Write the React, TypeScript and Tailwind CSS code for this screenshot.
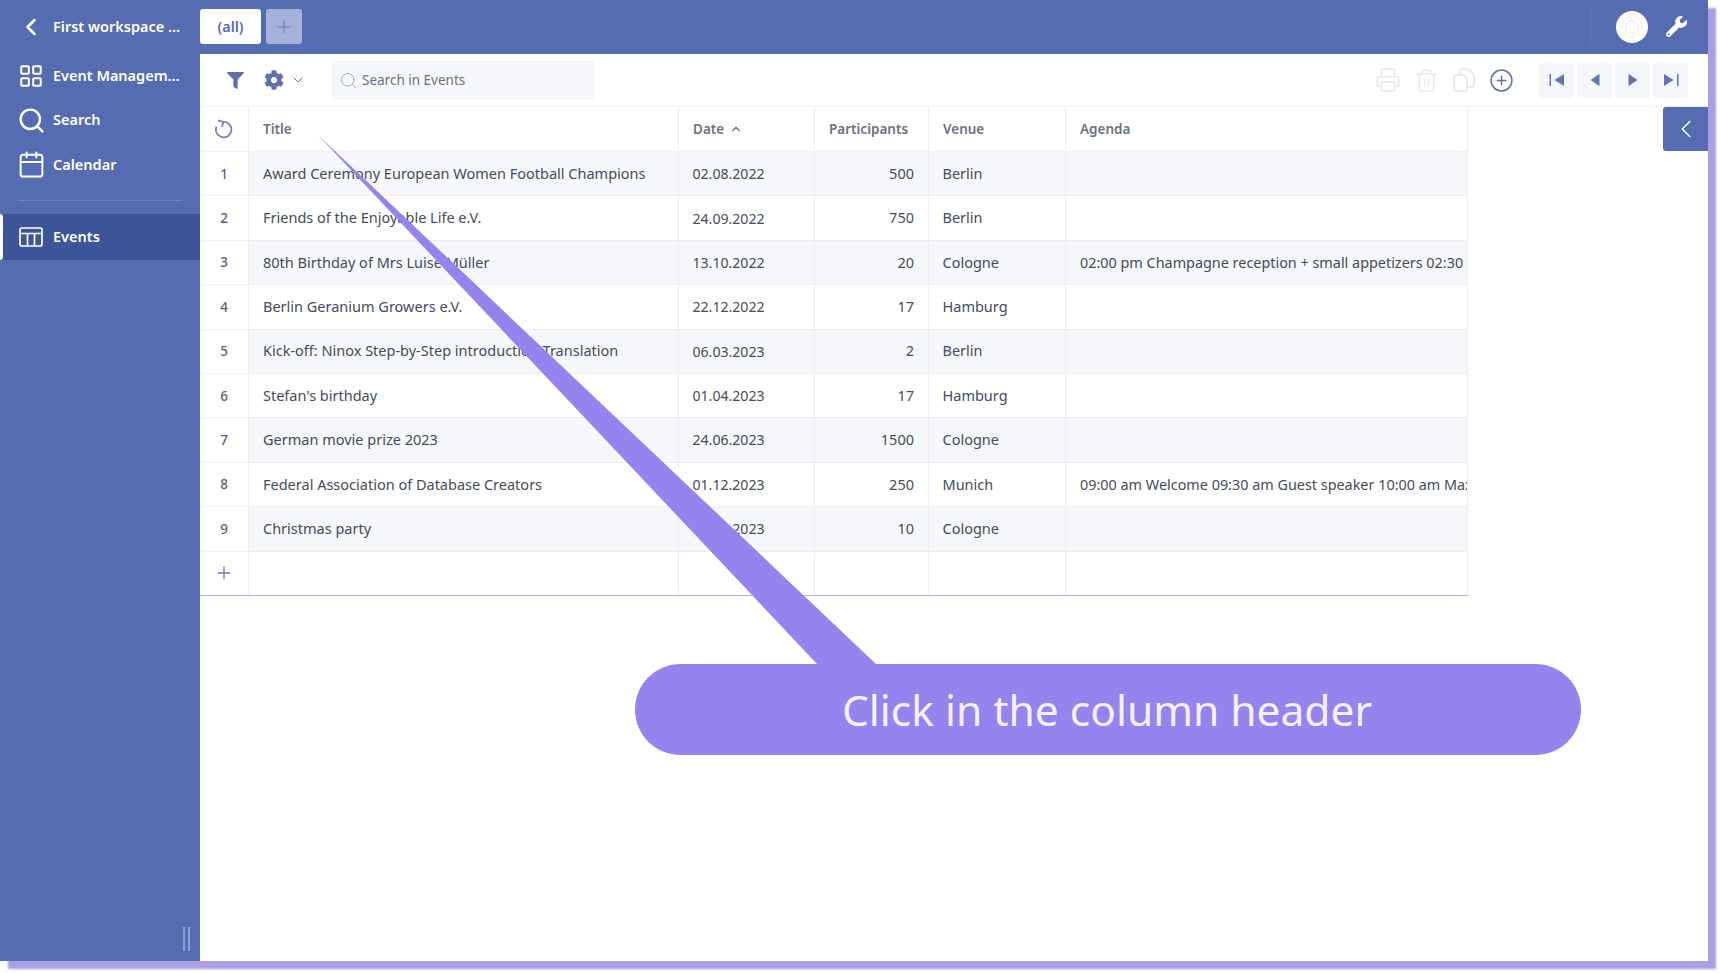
import React from "react";
import { ChevronLeft, ChevronDown, ChevronUp, LayoutGrid, Search, Calendar, Plus, Printer, Trash2, CirclePlus } from "lucide-react";
import { FaFilter, FaCog, FaWrench } from "react-icons/fa";

const ROWS = [
  { title: "Award Ceremony European Women Football Champions", date: "02.08.2022", count: "500", venue: "Berlin", agenda: "" },
  { title: "Friends of the Enjoyable Life e.V.", date: "24.09.2022", count: "750", venue: "Berlin", agenda: "" },
  { title: "80th Birthday of Mrs Luise Müller", date: "13.10.2022", count: "20", venue: "Cologne", agenda: "02:00 pm Champagne reception + small appetizers 02:30" },
  { title: "Berlin Geranium Growers e.V.", date: "22.12.2022", count: "17", venue: "Hamburg", agenda: "" },
  { title: "Kick-off: Ninox Step-by-Step introduction Translation", date: "06.03.2023", count: "2", venue: "Berlin", agenda: "" },
  { title: "Stefan's birthday", date: "01.04.2023", count: "17", venue: "Hamburg", agenda: "" },
  { title: "German movie prize 2023", date: "24.06.2023", count: "1500", venue: "Cologne", agenda: "" },
  { title: "Federal Association of Database Creators", date: "01.12.2023", count: "250", venue: "Munich", agenda: "09:00 am Welcome 09:30 am Guest speaker 10:00 am Max" },
  { title: "Christmas party", date: "16.12.2023", count: "10", venue: "Cologne", agenda: "" },
];

const COLS = "grid grid-cols-[49px_430px_136px_114px_137px_402px]";
const CELL = "flex items-center px-[14px] border-r border-[#eceef4] overflow-hidden whitespace-nowrap";

const TableIcon = () => (
  <svg width="24" height="20" viewBox="0 0 24 20" fill="none" stroke="white" strokeWidth="1.7">
    <rect x="1" y="1" width="22" height="18" rx="2" />
    <path d="M1 6.5h22M8.5 6.5V19M15.5 6.5V19" />
  </svg>
);

const Reload = () => (
  <svg width="20" height="20" viewBox="0 0 18 18" fill="none" stroke="#7583b5" strokeWidth="1.6">
    <path d="M8.500 2.500a7 7 0 1 1-6.300 4.400" />
    <path d="M3.600 1.200 8.500 2.500 7.200 7" />
  </svg>
);

const CopyIcon = () => (
  <svg width="22" height="24" viewBox="0 0 22 24" fill="none" stroke="#e6e8ef" strokeWidth="1.8">
    <path d="M3 7h6c2 0 5 3 5 5v9a2 2 0 0 1-2 2H3a2 2 0 0 1-2-2V9a2 2 0 0 1 2-2z" />
    <path d="M7 6V3a2 2 0 0 1 2-2h4c3 0 8 5 8 8v8a2 2 0 0 1-2 2h-4" />
  </svg>
);

const Avatar = () => (
  <div className="w-8 h-8 rounded-full bg-white flex items-center justify-center">
    <svg width="24" height="24" viewBox="0 0 24 24" fill="none" stroke="#e9e2dc" strokeWidth="0.9">
      <circle cx="12" cy="12" r="10" strokeDasharray="3 1" />
      <circle cx="12" cy="12" r="6.500" />
      <path d="M10 11h.5M13.500 11h.5M10.500 14c1 .8 2 .8 3 0" />
    </svg>
  </div>
);

const Triangle = ({ dir, bar }: { dir: "left" | "right"; bar?: boolean }) => {
  let d = "M12.500 1v12L3.500 7z";
  if (dir === "right") d = "M3.500 1v12l9-6z";
  if (dir === "left" && bar) d = "M15 1v12L5.500 7z";
  if (dir === "right" && bar) d = "M1 1v12l9.500-6z";
  return (
    <svg width="16" height="14" viewBox="0 0 16 14" fill="#6273ae">
      <path d={d} />
      {bar && <rect x={dir === "left" ? 0.5 : 14} y="1" width="1.500" height="12" />}
    </svg>
  );
};

const NavItem = ({ icon, label }: { icon: React.ReactNode; label: string }) => (
  <div className="flex items-center h-[44.5px] pl-[16px] gap-[7px]">
    <div className="w-[30px] flex justify-center shrink-0">{icon}</div>
    <span className="whitespace-nowrap">{label}</span>
  </div>
);

const PagerButton = ({ children }: { children: React.ReactNode }) => (
  <div className="w-[35px] h-[35px] rounded-[3px] bg-[#f5f6fa] flex items-center justify-center">{children}</div>
);

export default function App() {
  return (
    <div className="w-[1720px] h-[973px] bg-white overflow-hidden">
      <div className="relative w-[1708px] h-[961px] flex bg-white shadow-[8px_8px_2px_#a99fe4] font-['Noto_Sans',sans-serif] text-[15px] text-[#454b5c]">
        <aside className="w-[200px] shrink-0 bg-[#566cb0] text-white font-semibold text-[14.5px] flex flex-col relative">
          <div className="flex items-center h-[53.5px] pl-[17px] gap-[8px]">
            <ChevronLeft size={28} strokeWidth={2.2} className="shrink-0" />
            <span className="whitespace-nowrap">First workspace ...</span>
          </div>
          <NavItem icon={<LayoutGrid size={26} strokeWidth={1.9} />} label="Event Managem..." />
          <NavItem icon={<Search size={29} strokeWidth={2} />} label="Search" />
          <NavItem icon={<Calendar size={29} strokeWidth={1.6} />} label="Calendar" />
          <div className="mx-[18px] mt-[13px] mb-[13px] border-t border-[#6f83bf]" />
          <div className="relative bg-[#3f5599] py-[0.5px]">
            <div className="absolute left-0 top-0 bottom-0 w-[3px] bg-white rounded-r-sm" />
            <NavItem icon={<TableIcon />} label="Events" />
          </div>
          <div className="mt-auto mb-[10px] ml-[183px] flex gap-[3px] h-6">
            <div className="w-[2px] bg-[#8da0d6]" />
            <div className="w-[2px] bg-[#8da0d6]" />
          </div>
        </aside>

        <main className="flex-1 flex flex-col min-w-0 relative">
          <div className="h-[54px] pb-[1px] bg-[#566cb0] flex items-center">
            <div className="w-[61px] h-[35px] bg-white rounded-[3px] flex items-center justify-center text-[#566cb0] font-semibold text-[14.5px]">
              (all)
            </div>
            <div className="ml-[5px] w-9 h-[35px] bg-[#a5b1d8] rounded-[3px] flex items-center justify-center">
              <Plus size={20} strokeWidth={1.4} className="text-[#6b7fbb]" />
            </div>
            <div className="ml-auto h-[35px] border-l border-[#6478b8]" />
            <div className="ml-[25px]"><Avatar /></div>
            <div className="ml-[18px] mr-[21px]"><FaWrench size={21} className="text-white" /></div>
          </div>

          <div className="h-[53px] border-b border-[#eceef4] flex items-center pl-[27px] pr-[20px]">
            <FaFilter size={17} className="text-[#5f70ac]" />
            <div className="ml-[20px]"><FaCog size={20} className="text-[#5f70ac]" /></div>
            <ChevronDown size={16} strokeWidth={1.5} className="ml-[6px] text-[#5f70ac]" />
            <div className="ml-[26px] w-[262px] h-[38px] rounded-[3px] bg-[#f6f7fb] border border-[#f0f1f7] flex items-center pl-[6px] gap-[4px] text-[13.5px] text-[#6b7280]">
              <Search size={19} strokeWidth={1.2} className="text-[#9aa5c4]" />
              Search in Events
            </div>
            <div className="ml-auto flex items-center gap-[12.5px] text-[#e6e8ef]">
              <Printer size={26} strokeWidth={1.5} />
              <Trash2 size={25} strokeWidth={1.5} />
              <div className="w-[25px] flex justify-center"><CopyIcon /></div>
              <CirclePlus size={25} strokeWidth={1.4} className="text-[#5f70ac]" />
            </div>
            <div className="ml-[25.5px] flex gap-[3px]">
              <PagerButton><Triangle dir="left" bar /></PagerButton>
              <PagerButton><Triangle dir="left" /></PagerButton>
              <PagerButton><Triangle dir="right" /></PagerButton>
              <PagerButton><Triangle dir="right" bar /></PagerButton>
            </div>
          </div>

          <div className="w-[1268px] border-b border-[#aeb0dc] text-[14.5px]">
            <div className={`${COLS} h-[45px] border-b border-[#eceef4] font-semibold text-[13.5px] text-[#6b7280]`}>
              <div className={`${CELL} justify-center !px-0`}><Reload /></div>
              <div className={CELL}>Title</div>
              <div className={`${CELL} gap-[5px]`}>Date <ChevronUp size={14} strokeWidth={2} /></div>
              <div className={CELL}>Participants</div>
              <div className={CELL}>Venue</div>
              <div className={CELL}>Agenda</div>
            </div>
            {ROWS.map((row, i) => (
              <div key={row.title} className={`${COLS} h-[44.4px] border-b border-[#eceef4]`}>
                <div className={`${CELL} justify-center !px-0 font-medium text-[13.5px] text-[#5c6270]`}>{i + 1}</div>
                <div className={`${CELL} ${i % 2 === 0 ? "bg-[#f6f7fb]" : ""}`}>{row.title}</div>
                <div className={`${CELL} text-[14.1px] !pl-[13.5px] ${i % 2 === 0 ? "bg-[#f6f7fb]" : ""}`}>{row.date}</div>
                <div className={`${CELL} justify-end ${i % 2 === 0 ? "bg-[#f6f7fb]" : ""}`}>{row.count}</div>
                <div className={`${CELL} !pl-[13.5px] ${i % 2 === 0 ? "bg-[#f6f7fb]" : ""}`}>{row.venue}</div>
                <div className={`${CELL} !pr-0 text-[14.4px] ${i % 2 === 0 ? "bg-[#f6f7fb]" : ""}`}>{row.agenda}</div>
              </div>
            ))}
            <div className={`${COLS} h-[43px]`}>
              <div className={`${CELL} justify-center !px-0`}>
                <Plus size={20} strokeWidth={1.6} className="text-[#6b7bb3]" />
              </div>
              <div className={CELL} />
              <div className={CELL} />
              <div className={CELL} />
              <div className={CELL} />
              <div className={CELL} />
            </div>
          </div>

          <div className="absolute right-0 top-[107px] w-[45px] h-[44px] bg-[#566cb0] rounded-l-[3px] flex items-center justify-center">
            <ChevronLeft size={30} strokeWidth={1.2} className="text-white" />
          </div>
        </main>

        <svg className="absolute left-0 top-0 pointer-events-none" width="1708" height="961">
          <path d="M318 135 L818 665 L877 665 Z" fill="#9583ee" />
        </svg>
        <div className="absolute left-[635px] top-[664px] w-[946px] h-[91px] pr-[2px] rounded-full bg-[#9583ee] flex items-center justify-center text-[42.5px] text-[#f3f1fd]">
          Click in the column header
        </div>
      </div>
    </div>
  );
}
